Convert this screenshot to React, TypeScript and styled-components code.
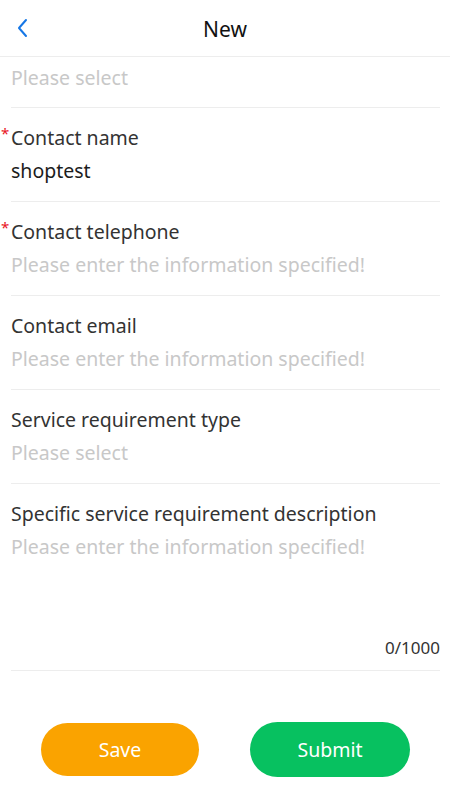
import React, { useState } from 'react';
import styled, { createGlobalStyle } from 'styled-components';

const GlobalStyle = createGlobalStyle`
  html, body {
    margin: 0;
    padding: 0;
    background: #fff;
  }
  body {
    font-family: "Noto Sans", Roboto, sans-serif;
  }
  * {
    box-sizing: border-box;
  }
`;

const Page = styled('div')`
  width: 450px;
  height: 800px;
  background: #fff;
  display: flex;
  flex-direction: column;
  overflow: hidden;
`;

const Header = styled('div')`
  height: 57px;
  display: grid;
  grid-template-columns: 60px 1fr 60px;
  align-items: center;
  border-bottom: 1px solid #ededed;
  flex-shrink: 0;
`;

const BackButton = styled('button')`
  border: none;
  background: none;
  padding: 0 0 0 16px;
  height: 100%;
  display: flex;
  align-items: center;
  cursor: pointer;
`;

const Title = styled('div')`
  text-align: center;
  font-size: 21px;
  color: #111;
  margin-top: 1px;
`;

const Form = styled('div')`
  padding: 0 10px 0 11px;
  display: flex;
  flex-direction: column;
`;

const Row = styled('div')<{ $first?: boolean }>`
  padding: ${(p) => (p.$first ? '4px 0 12px' : '14px 0 13px')};
  border-bottom: 1px solid #ededed;
`;

const Label = styled('div')`
  font-size: 19.5px;
  line-height: 32px;
  color: #333;
  display: flex;
  align-items: center;
`;

const Star = styled('span')`
  color: #e8141e;
  font-size: 15px;
  margin-left: -10px;
  width: 10px;
  align-self: flex-start;
  line-height: 22px;
`;

const Value = styled('div')<{ $placeholder?: boolean }>`
  font-size: 19.5px;
  line-height: 34px;
  color: ${(p) => (p.$placeholder ? '#c8c8c8' : '#1c1c1c')};
`;

const TextArea = styled('textarea')`
  display: block;
  width: 100%;
  height: 106px;
  border: none;
  outline: none;
  resize: none;
  padding: 0;
  font-family: "Noto Sans", Roboto, sans-serif;
  font-size: 19.5px;
  line-height: 34px;
  color: #1c1c1c;
  &::placeholder {
    color: #c8c8c8;
  }
`;

const Counter = styled('div')`
  text-align: right;
  font-size: 17px;
  line-height: 28px;
  color: #333;
  margin-top: -2px;
  margin-bottom: -5px;
`;

const Footer = styled('div')`
  display: flex;
  justify-content: center;
  padding-top: 51px;
`;

const ActionButton = styled('button')<{ $color: string; $w: number; $h: number }>`
  width: ${(p) => p.$w}px;
  height: ${(p) => p.$h}px;
  border: none;
  border-radius: 28px;
  background: ${(p) => p.$color};
  color: #fff;
  font-family: "Noto Sans", Roboto, sans-serif;
  font-size: 19.5px;
  cursor: pointer;
`;

const Buttons = styled('div')`
  display: flex;
  align-items: center;
  gap: 51px;
  margin-left: 1px;
`;

interface Field {
  label: string;
  required?: boolean;
  value?: string;
  placeholder: string;
}

const fields: Field[] = [
  { label: 'Contact name', required: true, value: 'shoptest', placeholder: '' },
  { label: 'Contact telephone', required: true, placeholder: 'Please enter the information specified!' },
  { label: 'Contact email', placeholder: 'Please enter the information specified!' },
  { label: 'Service requirement type', placeholder: 'Please select' },
];

export default function App() {
  const [desc, setDesc] = useState('');

  return (
    <Page>
      <GlobalStyle />
      <Header>
        <BackButton aria-label="back">
          <svg width="12" height="20" viewBox="0 0 12 20">
            <path d="M10 2 L3 10 L10 18" fill="none" stroke="#1677e6" strokeWidth="2" strokeLinecap="round" strokeLinejoin="round" />
          </svg>
        </BackButton>
        <Title>New</Title>
        <div />
      </Header>
      <Form>
        <Row $first>
          <Value $placeholder>Please select</Value>
        </Row>
        {fields.map((f) => (
          <Row key={f.label}>
            <Label>
              {f.required && <Star>*</Star>}
              {f.label}
            </Label>
            <Value $placeholder={!f.value}>{f.value || f.placeholder}</Value>
          </Row>
        ))}
        <Row>
          <Label>Specific service requirement description</Label>
          <TextArea
            value={desc}
            maxLength={1000}
            placeholder="Please enter the information specified!"
            onChange={(e) => setDesc(e.target.value)}
          />
          <Counter>{desc.length}/1000</Counter>
        </Row>
      </Form>
      <Footer>
        <Buttons>
          <ActionButton $color="#faa300" $w={158} $h={53}>Save</ActionButton>
          <ActionButton $color="#07c160" $w={160} $h={55}>Submit</ActionButton>
        </Buttons>
      </Footer>
    </Page>
  );
}
